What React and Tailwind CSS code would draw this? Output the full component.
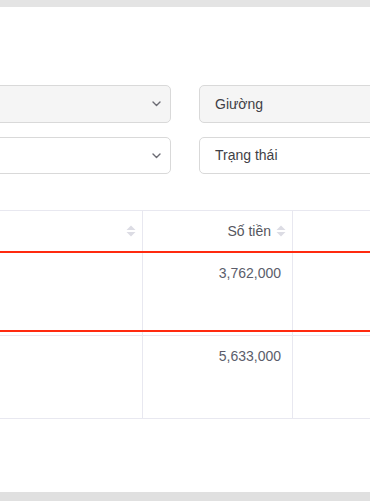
import React from 'react';

// ── Small icons ──────────────────────────────────────────────────────────────

const Chevron = () => (
  <svg width="9" height="6" viewBox="0 0 9 6" fill="none" className="shrink-0">
    <path d="M1 1l3.5 3.5L8 1" stroke="#6b6b73" strokeWidth="1.4" strokeLinecap="round" strokeLinejoin="round" />
  </svg>
);

const SortIcon = () => (
  <svg width="10" height="12" viewBox="0 0 10 12" className="shrink-0">
    <path d="M5 0.5L9.5 5H0.5z" fill="#dcdce4" />
    <path d="M5 11.5L9.5 7H0.5z" fill="#dcdce4" />
  </svg>
);

const rows = [
  { amount: '3,762,000', flagged: true },
  { amount: '5,633,000', flagged: false },
];

export default function App() {
  return (
    <div className="w-[370px] h-[501px] overflow-hidden bg-white flex flex-col font-['Liberation_Sans',Arial,sans-serif] text-[14px]">
      {/* top strip */}
      <div className="h-[7px] shrink-0 bg-[#e4e4e4]" />

      <div className="flex-1 overflow-hidden pt-[78px]">
        {/* Filters */}
        <div className="flex gap-[28px] ml-[-40px]">
          <div className="w-[211px] h-[38px] shrink-0 rounded-[5px] border border-[#d9d9d9] bg-[#f5f5f5] flex items-center justify-end pr-[9px]">
            <Chevron />
          </div>
          <div className="w-[200px] h-[38px] shrink-0 rounded-[5px] border border-[#d9d9d9] bg-[#f5f5f5] flex items-center pl-[15px] text-[#3f3f46]">
            Giường
          </div>
        </div>
        <div className="flex gap-[28px] ml-[-40px] mt-[14px]">
          <div className="w-[211px] h-[37px] shrink-0 rounded-[5px] border border-[#d9d9d9] bg-white flex items-center justify-end pr-[9px]">
            <Chevron />
          </div>
          <div className="w-[200px] h-[37px] shrink-0 rounded-[5px] border border-[#d9d9d9] bg-white flex items-center pl-[15px] text-[#3f3f46]">
            Trạng thái
          </div>
        </div>

        {/* Table */}
        <div className="mt-[36px] ml-[-40px] w-[460px]">
          {/* header */}
          <div className="flex h-[41px] border-t border-[#e8e8f0]">
            <div className="w-[183px] border-r border-[#e8e8f0] flex items-center justify-end pr-[6px]">
              <SortIcon />
            </div>
            <div className="w-[150px] border-r border-[#e8e8f0] flex items-center justify-end gap-[5px] pr-[6px] text-[#55565e]">
              <span>Số tiền</span>
              <SortIcon />
            </div>
            <div className="flex-1" />
          </div>

          {rows.map((row, i) => (
            <div key={i}>
              {row.flagged ? (
                <>
                  <div className="h-[2px] bg-[#ff2a0f]" />
                  <div className="flex h-[77px]">
                    <div className="w-[183px] border-r border-[#e8e8f0]" />
                    <div className="w-[150px] border-r border-[#e8e8f0] text-right pr-[11px] pt-[10px] leading-5 text-[#5b5d6b]">
                      {row.amount}
                    </div>
                    <div className="flex-1" />
                  </div>
                  <div className="h-[2px] bg-[#ff2a0f]" />
                  <div className="flex h-[4px] border-b border-[#e8e8f0]">
                    <div className="w-[183px] border-r border-[#e8e8f0]" />
                    <div className="w-[150px] border-r border-[#e8e8f0]" />
                    <div className="flex-1" />
                  </div>
                </>
              ) : (
                <div className="flex h-[83px] border-b border-[#e8e8f0]">
                  <div className="w-[183px] border-r border-[#e8e8f0]" />
                  <div className="w-[150px] border-r border-[#e8e8f0] text-right pr-[11px] pt-[10px] leading-5 text-[#5b5d6b]">
                    {row.amount}
                  </div>
                  <div className="flex-1" />
                </div>
              )}
            </div>
          ))}
        </div>
      </div>

      {/* bottom strip */}
      <div className="h-[9px] shrink-0 bg-[#e0e0e0]" />
    </div>
  );
}
